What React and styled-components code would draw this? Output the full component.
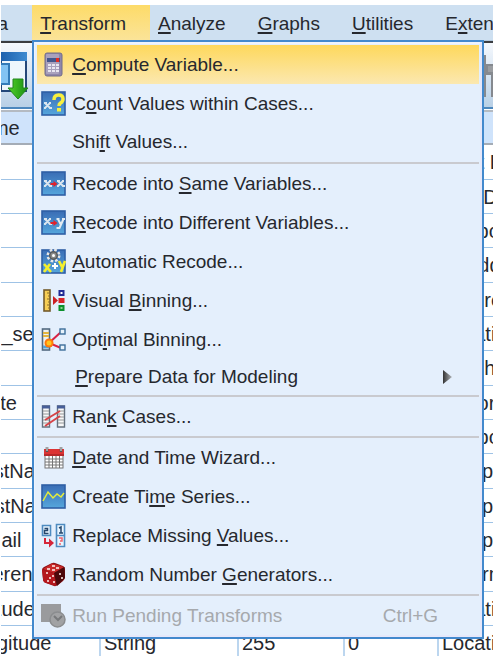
import React from "react";
import styled, { createGlobalStyle, css } from "styled-components";

const GlobalStyle = createGlobalStyle`
  * { box-sizing: border-box; }
  body {
    margin: 0;
    background: #fff;
    color: #26282e;
    font-family: "Liberation Sans", Arial, sans-serif;
    font-size: 19px;
    line-height: 22px;
  }
  button { font: inherit; color: inherit; border: 0; background: none; }
`;

const Shell = styled.main`
  height: 100vh;
  padding-top: 5px;
  margin-left: 1px;
  overflow: hidden;
`;

const MenuBar = styled.nav`
  display: flex;
  height: 36px;
  margin-left: -1px;
  border-left: 1px solid #fff;
  background: #cee0f1;
  border-bottom: 1px solid #b3c9de;
`;

const MenuBarSlot = styled.div`
  position: relative;
  flex: none;
  &:first-child { margin-left: -41px; }
`;

const MenuBarButton = styled.button`
  height: 36px;
  padding: 1px 24px 0 8px;
  white-space: nowrap;
  ${(p) => p.$open && css`background: linear-gradient(#fddb68, #fbe49a);`}
`;

const Mnemonic = styled.span`
  text-decoration: underline;
  text-decoration-thickness: 2px;
  text-decoration-skip-ink: none;
  text-underline-offset: 2px;
`;

const Menu = styled.div`
  position: absolute;
  z-index: 2;
  top: 100%;
  left: 0;
  min-width: 452px;
  padding: 3px 3px 2px;
  background: #e4effc;
  border: 2px solid #4389cd;
  box-shadow: inset -2px -2px #e6e8fa, inset 1px 2px #eef4fd;
`;

const MenuItem = styled.button`
  display: flex;
  align-items: center;
  width: 100%;
  height: ${(p) => (p.$size === "short" ? 36 : p.$size === "plain" ? 38 : 39)}px;
  padding: 0 41px 0 4px;
  text-align: left;
  white-space: nowrap;
  ${(p) => p.$active && css`background: linear-gradient(#fed85c, #fbe8b0);`}
  &:disabled { color: #a6a9ad; }
`;

const IconSlot = styled.span`
  flex: none;
  display: flex;
  width: ${(p) => (p.$wide ? 34 : 31)}px;
  svg { display: block; }
`;

const Shortcut = styled.span`
  margin-left: auto;
`;

const Arrow = styled.svg`
  margin: 0 -14px 0 auto;
`;

const Separator = styled.hr`
  height: 2px;
  margin: 0;
  border: 0;
  background: #c9cacf;
  &:first-of-type { margin-top: 1px; }
`;

const Toolbar = styled.div`
  display: flex;
  justify-content: space-between;
  height: 68px;
  padding-top: 9px;
  border-top: 2px solid #3a3c40;
  border-bottom: 2px solid #4d87bd;
  background: linear-gradient(#f4f8fd, #b9d0e6);
`;

const ToolButton = styled.button`
  padding: 0;
  height: 50px;
  svg { display: block; }
`;

const Sheet = styled.table`
  width: calc(100% + 315px);
  margin-left: -116px;
  margin-top: 1px;
  border-top: 2px solid #b4bac2;
  border-spacing: 0;
  table-layout: fixed;
  font-size: 20px;
`;

const Col = styled.col`
  width: ${(p) => p.$w};
`;

const Head = styled.th`
  height: 33px;
  padding: 0 4px;
  font-weight: 400;
  background: #cfe3fb;
  border-bottom: 2px solid #a4acb6;
`;

const Row = styled.tr`
  height: 34px;
  &:nth-child(3n + 1) { height: 35px; }
`;

const Cell = styled.td`
  padding: 0 3px;
  overflow: hidden;
  white-space: nowrap;
  border-right: 2px solid #bcd6ef;
  border-bottom: 1px solid #9fc3e6;
`;

const Svg = ({ children }) => (
  <svg width="25" height="25" viewBox="0 0 25 25" aria-hidden="true">{children}</svg>
);

const BlueTile = () => (
  <>
    <defs>
      <linearGradient id="tile" x1="0" y1="0" x2="0" y2="1">
        <stop offset="0" stopColor="#3a6db5" />
        <stop offset="1" stopColor="#55a6dc" />
      </linearGradient>
    </defs>
    <rect x="1" y="1" width="23" height="23" fill="url(#tile)" stroke="#2f5fa5" strokeWidth="1.6" />
  </>
);

const Cross = ({ x, y, s = 7, color = "#dce6ef" }) => (
  <path
    d={`M${x} ${y}l${s} ${s}M${x + s} ${y}l${-s} ${s}M${x - 1} ${y}h3M${x + s - 1} ${y}h2M${x - 1} ${y + s}h2M${x + s - 1} ${y + s}h3`}
    stroke={color}
    strokeWidth="1.8"
  />
);

const RedArrow = () => <path d="M9.500 12h3V10l4 3-4 3v-2h-3z" fill="#e0222c" />;

const icons = {
  calculator: (
    <Svg>
      <rect x="4" y="1" width="17" height="23" rx="2" fill="#8f86ab" stroke="#716c8a" />
      <rect x="5" y="2" width="13" height="20" rx="1" fill="#a9a1bd" />
      <rect x="6" y="6" width="13" height="4" fill="#44568b" />
      <rect x="15" y="6" width="3" height="4" fill="#e22b22" />
      <path d="M7 12h3v2H7zM11 12h3v2h-3zM15 12h3v2h-3zM7 15h3v2H7zM11 15h3v2h-3zM15 15h3v2h-3zM7 18h3v2H7zM11 18h3v2h-3zM15 18h3v2h-3z" fill="#e8e6f1" />
    </Svg>
  ),
  count: (
    <Svg>
      <BlueTile />
      <Cross x={4} y={12} s={5} />
      <path d="M13 9q0-5 4.500-5t4.500 4q0 2.500-2.500 4-1.500 1-1.500 3" fill="none" stroke="#f8f03e" strokeWidth="3.500" />
      <rect x="16" y="17" width="4" height="3.500" fill="#f8f03e" />
    </Svg>
  ),
  same: (
    <Svg><BlueTile /><Cross x={4} y={10} s={5} /><Cross x={17} y={10} s={5} /><RedArrow /></Svg>
  ),
  different: (
    <Svg>
      <BlueTile />
      <Cross x={4} y={9} s={5} />
      <path d="M17 9l3 6M22.500 9L18.500 18h-3M15.500 9h3M21 9h3" fill="none" stroke="#e3ebf2" strokeWidth="2" />
      <RedArrow />
    </Svg>
  ),
  automatic: (
    <Svg>
      <BlueTile />
      <path d="M3 15l7 8M9 15l-6 8M18 12l3 6M24 12l-4 11" stroke="#f4ef2d" strokeWidth="2.600" />
      <path d="M14 14v6M11 17h6" stroke="#fff" strokeWidth="2" />
      <circle cx="12.500" cy="6.500" r="5.500" fill="none" stroke="#e7e7e7" strokeWidth="3" strokeDasharray="2.500 1.820" />
      <circle cx="12.500" cy="6.500" r="3.800" fill="#898987" stroke="#575b5e" strokeWidth="1.500" />
      <circle cx="12.500" cy="6.500" r="1.500" fill="#fff" />
    </Svg>
  ),
  visual: (
    <Svg>
      <rect x="3" y="2" width="6" height="21" fill="#f7ce55" stroke="#735b2b" strokeWidth="1.600" />
      <path d="M6 5h3M7 8h2M6 11h3M7 14h2M6 17h3M7 20h2" stroke="#8b702d" />
      <path d="M12 8l5 4.500-5 4.500z" fill="#cb1e25" />
      <rect x="18.500" y="3" width="4" height="4" fill="#fff" stroke="#222b96" strokeWidth="2" />
      <rect x="17.500" y="10" width="6" height="5" fill="#d9252a" />
      <rect x="18.500" y="18" width="4" height="4" fill="#8bd28f" stroke="#0b902c" strokeWidth="2" />
    </Svg>
  ),
  optimal: (
    <Svg>
      <rect x="1.500" y="2" width="7" height="21" fill="#eef1ef" stroke="#536a80" strokeWidth="1.600" />
      <path d="M2 6h6M2 9h6" stroke="#e2b540" strokeWidth="2" />
      <path d="M2 20h6" stroke="#52a2d9" strokeWidth="3" />
      <path d="M20 5L8 16l12 5" fill="none" stroke="#d92345" strokeWidth="2" />
      <circle cx="8" cy="16" r="4.500" fill="#ff7b0a" />
      <circle cx="8" cy="16" r="2.500" fill="#ffc51e" />
      <rect x="19" y="2" width="5" height="5" fill="#e8f3fb" stroke="#3d6e9a" strokeWidth="1.400" />
      <rect x="19" y="18" width="5" height="5" fill="#e8f3fb" stroke="#3d6e9a" strokeWidth="1.400" />
    </Svg>
  ),
  rank: (
    <Svg>
      <path d="M1.500 2h7v21h-7zM16.500 2h7v21h-7z" fill="#f7f7f7" stroke="#65717e" strokeWidth="1.400" />
      <path d="M1 3h8M16 3h8" stroke="#475f98" strokeWidth="3" />
      <path d="M2 7h6M2 10h6M2 13h6M2 16h6M2 19h6M17 7h6M17 10h6M17 13h6M17 16h6M17 19h6" stroke="#929698" />
      <path d="M4 16L19 7M4 22l15-10" stroke="#d64347" strokeWidth="2" />
    </Svg>
  ),
  calendar: (
    <Svg>
      <rect x="4" y="5" width="18" height="18" fill="#fff" stroke="#747474" />
      <path d="M4 14h18M4 17h18M4 20h18M8 11v12M11.500 11v12M15 11v12M18.500 11v12" stroke="#767676" />
      <rect x="3" y="4" width="20" height="7" fill="#dc3434" />
      <path d="M3 10h20" stroke="#901f22" />
      <path d="M6 7V2M20 7V2" stroke="#555" strokeWidth="2.500" />
      <path d="M6 6V2M20 6V2" stroke="#eee" />
    </Svg>
  ),
  series: (
    <Svg><BlueTile /><path d="M2 17l5-9 5 6 4-4 4 3 3-4" fill="none" stroke="#e6ed38" strokeWidth="1.500" /></Svg>
  ),
  replace: (
    <Svg>
      <path d="M1.500 2.500h8v10h-8zM15.500 1.500h8v22h-8z" fill="#eaf6ff" stroke="#4e8bc0" strokeWidth="1.600" />
      <path d="M16 12.500h7" stroke="#4e8bc0" strokeWidth="1.500" />
      <path d="M3.500 5.500h3v2h-3v3h4M18 5l2-1v6M18 10h4" fill="none" stroke="#26466b" strokeWidth="1.500" />
      <path d="M18 15h3v3h-2M19 20v2" fill="none" stroke="#ef626b" strokeWidth="1.500" />
      <path d="M4 15v5h5" fill="none" stroke="#d5263a" strokeWidth="2" />
      <path d="M8 15.500l5 4.500-5 4.500z" fill="#d5263a" />
    </Svg>
  ),
  dice: (
    <Svg>
      <path d="M1 8Q1 6 3 5L10 1.500Q12 0.500 14 1l8 3q2 1 2 3v8q0 2-2 4l-5 4q-2 1.500-4 1l-8-3q-3-1-3-4z" fill="#8e1014" />
      <path d="M2 7L11 1.500 23 5l-10 6z" fill="#c82a2a" />
      <path d="M13 11l10.500-6 .5 11-8 8z" fill="#4c080b" />
      <path d="M1 7.500L13 11l2 13-10-3q-3-1-3-4z" fill="#b4171d" />
      <path d="M6 7h3M11 4h3M15 6h3M11 8h3M5 11h2M11 14h2M8 16h2M6 19h2M12 20h2M18 12h2M20 16h2" stroke="#fff1ed" strokeWidth="1.600" />
    </Svg>
  ),
  run: (
    <Svg>
      <path d="M0 1h20v18H0z" fill="#9a9b9d" />
      <circle cx="16.500" cy="16.500" r="7.500" fill="#a1a2a4" stroke="#8b8d8f" strokeWidth="1.500" />
      <path d="M13 13l4 4 4-4" fill="none" stroke="#77797b" strokeWidth="2" />
    </Svg>
  ),
};

const menuBar = ["Data", "_Transform", "_Analyze", "_Graphs", "_Utilities", "E_xtensions"];

const transformMenu = [
  { icon: "calculator", label: "_Compute Variable...", active: true },
  { icon: "count", label: "C_ount Values within Cases..." },
  { label: "Shi_ft Values...", size: "plain" },
  null,
  { icon: "same", label: "Recode into _Same Variables..." },
  { icon: "different", label: "_Recode into Different Variables..." },
  { icon: "automatic", label: "_Automatic Recode..." },
  { icon: "visual", label: "Visual _Binning..." },
  { icon: "optimal", label: "Opt_imal Binning..." },
  { label: "_Prepare Data for Modeling", submenu: true, size: "short" },
  null,
  { icon: "rank", label: "Ran_k Cases..." },
  null,
  { icon: "calendar", label: "_Date and Time Wizard..." },
  { icon: "series", label: "Create Ti_me Series..." },
  { icon: "replace", label: "Replace Missing _Values..." },
  { icon: "dice", label: "Random Number _Generators..." },
  null,
  { icon: "run", label: "Run Pending Transforms", shortcut: "Ctrl+G", disabled: true },
];

const variables = [
  ["StartDate", "Start Date"],
  ["EndDate", "End Date"],
  ["Status", "Response Type"],
  ["IPAddress", "IP Address"],
  ["Progress", "Progress"],
  ["Duration__in_seconds_", "Duration (in seconds)"],
  ["Finished", "Finished"],
  ["RecordedDate", "Recorded Date"],
  ["ResponseId", "Response ID"],
  ["RecipientLastName", "Recipient Last Name"],
  ["RecipientFirstName", "Recipient First Name"],
  ["RecipientEmail", "Recipient Email"],
  ["ExternalReference", "External Data Reference"],
  ["LocationLatitude", "Location Latitude"],
  ["LocationLongitude", "Location Longitude"],
];

function Label({ text }) {
  const at = text.indexOf("_");
  if (at < 0) return <span>{text}</span>;
  return (
    <span>
      {text.slice(0, at)}
      <Mnemonic>{text[at + 1]}</Mnemonic>
      {text.slice(at + 2)}
    </span>
  );
}

function TransformMenu() {
  return (
    <Menu role="menu" aria-label="Transform">
      {transformMenu.map((item, i) =>
        item ? (
          <MenuItem key={i} role="menuitem" $size={item.size} $active={item.active} disabled={item.disabled}>
            <IconSlot $wide={item.submenu}>{icons[item.icon]}</IconSlot>
            <Label text={item.label} />
            {item.shortcut && <Shortcut>{item.shortcut}</Shortcut>}
            {item.submenu && (
              <Arrow width="9" height="14" viewBox="0 0 9 14" aria-hidden="true">
                <defs>
                  <linearGradient id="arrow">
                    <stop offset="0" stopColor="#333" />
                    <stop offset="1" stopColor="#b0b4b8" />
                  </linearGradient>
                </defs>
                <path d="M0 0l9 7-9 7z" fill="url(#arrow)" />
              </Arrow>
            )}
          </MenuItem>
        ) : (
          <Separator key={i} />
        )
      )}
    </Menu>
  );
}

export default function App() {
  return (
    <>
      <GlobalStyle />
      <Shell>
        <MenuBar aria-label="Main menu">
          {menuBar.map((name) => {
            const open = name === "_Transform";
            return (
              <MenuBarSlot key={name}>
                <MenuBarButton $open={open} aria-expanded={open}><Label text={name} /></MenuBarButton>
                {open && <TransformMenu />}
              </MenuBarSlot>
            );
          })}
        </MenuBar>
        <Toolbar>
          <ToolButton aria-label="Go to case">
            <svg width="30" height="50" viewBox="0 0 30 50">
              <defs>
                <linearGradient id="title" x1="0" y1="0" x2="1" y2="0">
                  <stop offset="0" stopColor="#1c61ae" />
                  <stop offset="1" stopColor="#3e8ad0" />
                </linearGradient>
                <linearGradient id="green">
                  <stop offset="0" stopColor="#54d329" />
                  <stop offset="1" stopColor="#168b12" />
                </linearGradient>
              </defs>
              <path d="M0 1h25v38H0z" fill="#eef6fc" stroke="#244779" strokeWidth="2" />
              <path d="M0 0h26v9H0z" fill="url(#title)" />
              <path d="M-2 12H8v20H-2z" fill="#82c3f3" stroke="#337bb9" strokeWidth="2" />
              <path d="M12 27h10v9h5l-10 11L7 36h5z" fill="url(#green)" stroke="#23851c" />
            </svg>
          </ToolButton>
          <ToolButton aria-label="Variables">
            <svg width="9" height="50" viewBox="0 0 9 50">
              <path d="M0 3h2v42H0zM0 12h9v11H0zM7 23h2v22H7z" fill="#85898f" />
              <path d="M4 14h5v6H4z" fill="#9a9da1" />
            </svg>
          </ToolButton>
        </Toolbar>
        <Sheet>
          <colgroup>
            <Col $w="216px" />
            <Col $w="138px" />
            <Col $w="106px" />
            <Col $w="94px" />
            <Col $w="auto" />
          </colgroup>
          <thead>
            <tr>
              {["Name", "Type", "Width", "Decimals", "Label"].map((h) => <Head key={h}>{h}</Head>)}
            </tr>
          </thead>
          <tbody>
            {variables.map(([name, label]) => (
              <Row key={name}>
                <Cell>{name}</Cell>
                <Cell>String</Cell>
                <Cell>255</Cell>
                <Cell>0</Cell>
                <Cell>{label}</Cell>
              </Row>
            ))}
          </tbody>
        </Sheet>
      </Shell>
    </>
  );
}
